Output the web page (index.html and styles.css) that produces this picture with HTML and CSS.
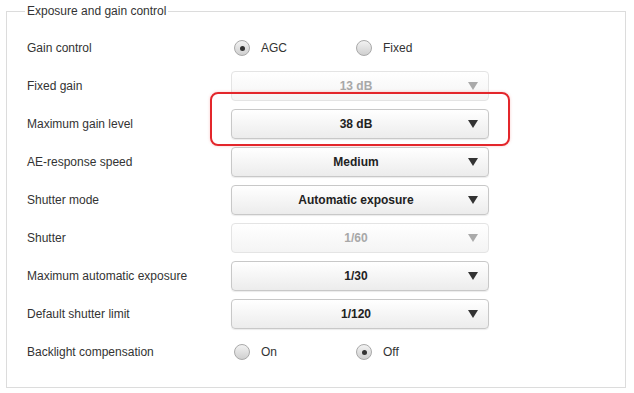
FILE: index.html
```html
<!DOCTYPE html>
<html lang="en">
<head>
    <meta charset="UTF-8">
    <title>Exposure and gain control</title>
    <link rel="stylesheet" href="styles.css">
</head>
<body>
    <fieldset class="panel">
        <legend>Exposure and gain control</legend>

        <div class="row">
            <div class="label">Gain control</div>
            <div class="radios">
                <label class="radio-option"><span class="radio checked"></span>AGC</label>
                <label class="radio-option"><span class="radio"></span>Fixed</label>
            </div>
        </div>

        <div class="row">
            <div class="label">Fixed gain</div>
            <div class="select disabled"><span class="value">13 dB</span><span class="arrow"></span></div>
        </div>

        <div class="row">
            <div class="label">Maximum gain level</div>
            <div class="select highlighted"><span class="value">38 dB</span><span class="arrow"></span></div>
        </div>

        <div class="row">
            <div class="label">AE-response speed</div>
            <div class="select"><span class="value">Medium</span><span class="arrow"></span></div>
        </div>

        <div class="row">
            <div class="label">Shutter mode</div>
            <div class="select"><span class="value">Automatic exposure</span><span class="arrow"></span></div>
        </div>

        <div class="row">
            <div class="label">Shutter</div>
            <div class="select disabled"><span class="value">1/60</span><span class="arrow"></span></div>
        </div>

        <div class="row">
            <div class="label">Maximum automatic exposure</div>
            <div class="select"><span class="value">1/30</span><span class="arrow"></span></div>
        </div>

        <div class="row">
            <div class="label">Default shutter limit</div>
            <div class="select"><span class="value">1/120</span><span class="arrow"></span></div>
        </div>

        <div class="row">
            <div class="label">Backlight compensation</div>
            <div class="radios">
                <label class="radio-option"><span class="radio"></span>On</label>
                <label class="radio-option"><span class="radio checked"></span>Off</label>
            </div>
        </div>
    </fieldset>
</body>
</html>
```

FILE: styles.css
```css
body {
    margin: 0;
    padding: 0;
    background-color: white;
    font-family: "Liberation Sans", Arial, sans-serif;
    font-size: 12px;
    color: #333;
}

.panel {
    margin: 4px 8px 0 6px;
    padding: 11px 0 16px 0;
    border: 1px solid #dcdcdc;
    min-width: 0;
}

.panel legend {
    margin-left: 18px;
    padding: 0 2px;
    line-height: 14px;
    color: #333;
}

.row {
    display: grid;
    grid-template-columns: 204px 258px;
    align-items: center;
    height: 38px;
    padding-left: 20px;
}

.label {
    color: #333;
}

/* Select boxes */
.select {
    position: relative;
    display: flex;
    align-items: center;
    height: 30px;
    box-sizing: border-box;
    border: 1px solid #c8c8c8;
    border-radius: 4px;
    background: linear-gradient(#ffffff, #ececec);
    box-shadow: 0 1px 1px rgba(0, 0, 0, 0.08);
    font-weight: bold;
    color: #222;
}

.select .value {
    flex: 1;
    text-align: center;
    padding-left: 12px;
}

.select .arrow {
    width: 0;
    height: 0;
    margin-right: 10px;
    border-left: 5px solid transparent;
    border-right: 5px solid transparent;
    border-top: 8px solid #333;
}

.select.disabled {
    border-color: #e4e4e4;
    background: linear-gradient(#ffffff, #f4f4f4);
    box-shadow: none;
    color: #a8a8a8;
}

.select.disabled .arrow {
    border-top-color: #aaa;
}

/* Red annotation around the maximum gain level */
.select.highlighted:after {
    content: '';
    position: absolute;
    left: -22px;
    right: -22px;
    top: -18px;
    bottom: -8px;
    border: 2px solid #e3262b;
    border-radius: 8px;
    box-shadow: 0 0 3px rgba(227, 38, 43, 0.25);
    pointer-events: none;
}

/* Radio buttons */
.radios {
    display: flex;
    padding-left: 3px;
}

.radio-option {
    display: flex;
    align-items: center;
    gap: 11px;
    width: 122px;
    color: #333;
}

.radio {
    width: 16px;
    height: 16px;
    box-sizing: border-box;
    border: 1px solid #a9a9a9;
    border-radius: 50%;
    background: linear-gradient(#f2f2f2, #cfcfcf);
    display: flex;
    align-items: center;
    justify-content: center;
}

.radio.checked:before {
    content: '';
    width: 5px;
    height: 5px;
    border-radius: 50%;
    background-color: #333;
}
```
